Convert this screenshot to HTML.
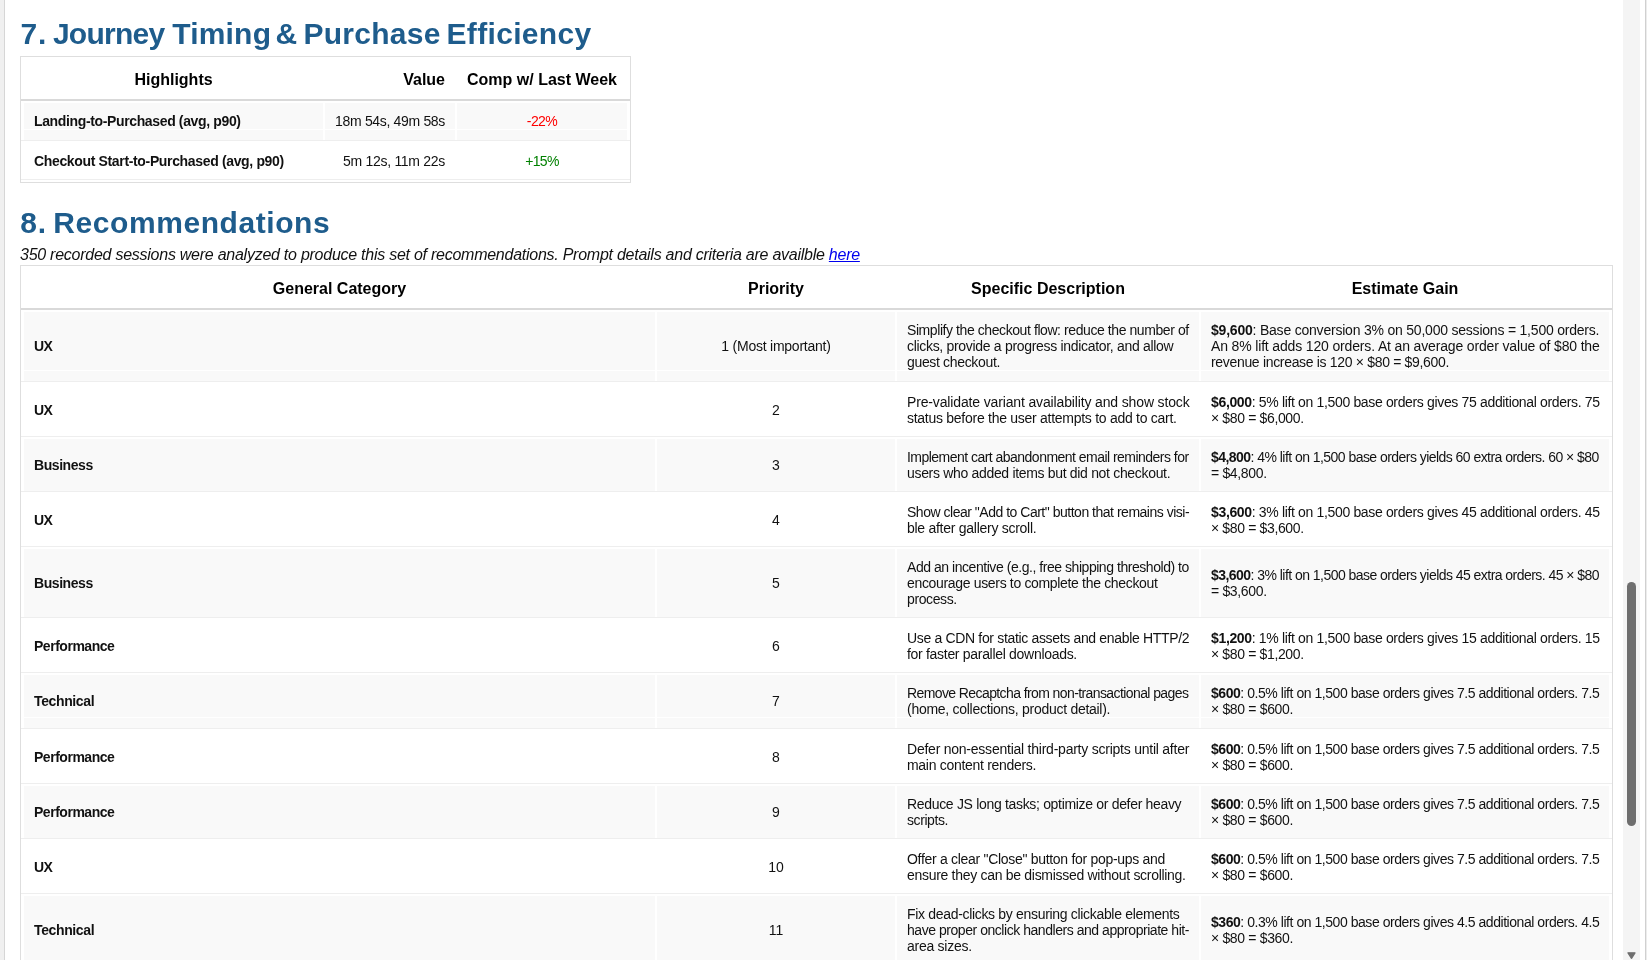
<!DOCTYPE html>
<html><head><meta charset="utf-8"><style>
html,body{margin:0;padding:0;background:#fff;overflow:hidden}
body{width:1647px;height:960px;position:relative;font-family:"Liberation Sans",sans-serif;color:#111}
.a{position:absolute}
.h{position:absolute;color:#1e5c8c;font-weight:bold;font-size:30px;line-height:32px;white-space:nowrap}
.ln{position:absolute;background:#eeeeee;height:1px}
.sl{position:absolute;background:#fff;height:1px}
.bg{position:absolute;background:#f9f9f9}
.th{position:absolute;font-weight:bold;font-size:16px;line-height:18px;white-space:nowrap;color:#000}
.tx{position:absolute;font-size:14px;line-height:16px;white-space:nowrap;color:#111}
.b{font-weight:bold}
.bs{font-weight:bold;font-family:"Liberation Serif",serif;font-size:15px;letter-spacing:0}
</style></head><body>
<div style="position:absolute;left:0;top:0;width:1647px;height:960px;will-change:transform">
<div class="a" style="left:0;top:0;width:4px;height:960px;background:#f0f0f0"></div>
<div class="a" style="left:4px;top:0;width:1px;height:960px;background:#d6d6d6"></div>

<div class="h" id="h7w0" style="left:20.60px;top:18px;letter-spacing:0.800px;">7.</div>
<div class="h" id="h7w1" style="left:52.90px;top:18px;letter-spacing:-0.733px;">Journey</div>
<div class="h" id="h7w2" style="left:172.20px;top:18px;letter-spacing:0.200px;">Timing</div>
<div class="h" id="h7w3" style="left:275.60px;top:18px;letter-spacing:-6.800px;">&amp;</div>
<div class="h" id="h7w4" style="left:303.50px;top:18px;letter-spacing:0.257px;">Purchase</div>
<div class="h" id="h7w5" style="left:446.50px;top:18px;letter-spacing:0.333px;">Efficiency</div>
<div class="a" style="left:20px;top:56px;width:609px;height:125px;border:1px solid #dedede"></div>
<div class="a" style="left:21px;top:99px;width:609px;height:2px;background:#d9d9d9"></div>
<div class="bg" style="left:24px;top:103px;width:299px;height:37px"></div>
<div class="bg" style="left:325px;top:103px;width:130px;height:37px"></div>
<div class="bg" style="left:457px;top:103px;width:170px;height:37px"></div>
<div class="sl" style="left:24px;top:129px;width:603px"></div>
<div class="ln" style="left:21px;top:140px;width:609px"></div>
<div class="ln" style="left:21px;top:179px;width:609px"></div>
<div class="th" style="left:24px;width:299px;top:71px;text-align:center">Highlights</div>
<div class="th" style="left:325px;width:120px;top:71px;text-align:right">Value</div>
<div class="th" style="left:457px;width:170px;top:71px;text-align:center">Comp w/ Last Week</div>
<div class="tx b" id="t1a" style="left:34px;top:113px;letter-spacing:-0.361px;">Landing-to-Purchased (avg, p90)</div>
<div class="tx" id="t1b" style="right:1202px;top:113px;letter-spacing:-0.330px;">18m 54s, 49m 58s</div>
<div class="tx" style="left:457px;width:170px;top:113px;text-align:center;color:#ff0000"><span id="t1c" style="letter-spacing:-0.600px;">-22%</span></div>
<div class="tx b" id="t1d" style="left:34px;top:153px;letter-spacing:-0.346px;">Checkout Start-to-Purchased (avg, p90)</div>
<div class="tx" id="t1e" style="right:1202px;top:153px;letter-spacing:-0.293px;">5m 12s, 11m 22s</div>
<div class="tx" style="left:457px;width:170px;top:153px;text-align:center;color:#008000"><span id="t1f" style="letter-spacing:-0.667px;">+15%</span></div>
<div class="h" id="h8w0" style="left:20.30px;top:207px;letter-spacing:0.800px;">8.</div>
<div class="h" id="h8w1" style="left:53.30px;top:207px;letter-spacing:0.572px;">Recommendations</div>
<div class="a" id="it" style="left:20px;top:246px;font-style:italic;font-size:16px;line-height:18px;white-space:nowrap;color:#111;letter-spacing:-0.255px;">350 recorded sessions were analyzed to produce this set of recommendations. Prompt details and criteria are availble <span style="color:#0000ee;text-decoration:underline">here</span></div>
<div class="a" style="left:20px;top:265px;width:1591px;height:900px;border:1px solid #dedede"></div>
<div class="a" style="left:21px;top:308px;width:1591px;height:2px;background:#d9d9d9"></div>
<div class="th" style="left:24px;width:631px;top:280px;text-align:center">General Category</div>
<div class="th" style="left:657px;width:238px;top:280px;text-align:center">Priority</div>
<div class="th" style="left:897px;width:302px;top:280px;text-align:center">Specific Description</div>
<div class="th" style="left:1201px;width:408px;top:280px;text-align:center">Estimate Gain</div>
<div class="bg" style="left:24px;top:312px;width:631px;height:69px"></div>
<div class="bg" style="left:657px;top:312px;width:238px;height:69px"></div>
<div class="bg" style="left:897px;top:312px;width:302px;height:69px"></div>
<div class="bg" style="left:1201px;top:312px;width:408px;height:69px"></div>
<div class="ln" style="left:21px;top:381px;width:1591px"></div>
<div class="sl" style="left:24px;top:370px;width:1585px"></div>
<div class="tx b" id="c0" style="left:34px;top:338px;letter-spacing:-0.700px;">UX</div>
<div class="tx" style="left:657px;width:238px;top:338px;text-align:center"><span id="p0" style="letter-spacing:-0.236px;">1 (Most important)</span></div>
<div class="tx" id="d0_0" style="left:907px;top:322px;letter-spacing:-0.421px;">Simplify the checkout flow: reduce the number of</div>
<div class="tx" id="d0_1" style="left:907px;top:338px;letter-spacing:-0.309px;">clicks, provide a progress indicator, and allow</div>
<div class="tx" id="d0_2" style="left:907px;top:354px;letter-spacing:-0.339px;">guest checkout.</div>
<div class="tx" id="g0_0" style="left:1211px;top:322px;letter-spacing:-0.212px;"><span class="b">$9,600</span>: Base conversion 3% on 50,000 sessions = 1,500 orders.</div>
<div class="tx" id="g0_1" style="left:1211px;top:338px;letter-spacing:-0.154px;">An 8% lift adds 120 orders. At an average order value of $80 the</div>
<div class="tx" id="g0_2" style="left:1211px;top:354px;letter-spacing:-0.323px;">revenue increase is 120 × $80 = $9,600.</div>
<div class="ln" style="left:21px;top:436px;width:1591px"></div>
<div class="tx b" id="c1" style="left:34px;top:402px;letter-spacing:-0.700px;">UX</div>
<div class="tx" style="left:657px;width:238px;top:402px;text-align:center"><span id="p1" style="">2</span></div>
<div class="tx" id="d1_0" style="left:907px;top:394px;letter-spacing:-0.144px;">Pre-validate variant availability and show stock</div>
<div class="tx" id="d1_1" style="left:907px;top:410px;letter-spacing:-0.272px;">status before the user attempts to add to cart.</div>
<div class="tx" id="g1_0" style="left:1211px;top:394px;letter-spacing:-0.345px;"><span class="b">$6,000</span>: 5% lift on 1,500 base orders gives 75 additional orders. 75</div>
<div class="tx" id="g1_1" style="left:1211px;top:410px;letter-spacing:-0.357px;">× $80 = $6,000.</div>
<div class="bg" style="left:24px;top:439px;width:631px;height:52px"></div>
<div class="bg" style="left:657px;top:439px;width:238px;height:52px"></div>
<div class="bg" style="left:897px;top:439px;width:302px;height:52px"></div>
<div class="bg" style="left:1201px;top:439px;width:408px;height:52px"></div>
<div class="ln" style="left:21px;top:491px;width:1591px"></div>
<div class="tx b" id="c2" style="left:34px;top:457px;letter-spacing:-0.429px;">Business</div>
<div class="tx" style="left:657px;width:238px;top:457px;text-align:center"><span id="p2" style="">3</span></div>
<div class="tx" id="d2_0" style="left:907px;top:449px;letter-spacing:-0.527px;">Implement cart abandonment email reminders for</div>
<div class="tx" id="d2_1" style="left:907px;top:465px;letter-spacing:-0.321px;">users who added items but did not checkout.</div>
<div class="tx" id="g2_0" style="left:1211px;top:449px;letter-spacing:-0.544px;"><span class="b">$4,800</span>: 4% lift on 1,500 base orders yields 60 extra orders. 60 × $80</div>
<div class="tx" id="g2_1" style="left:1211px;top:465px;letter-spacing:-0.344px;">= $4,800.</div>
<div class="ln" style="left:21px;top:546px;width:1591px"></div>
<div class="tx b" id="c3" style="left:34px;top:512px;letter-spacing:-0.700px;">UX</div>
<div class="tx" style="left:657px;width:238px;top:512px;text-align:center"><span id="p3" style="">4</span></div>
<div class="tx" id="d3_0" style="left:907px;top:504px;letter-spacing:-0.485px;">Show clear "Add to Cart" button that remains visi-</div>
<div class="tx" id="d3_1" style="left:907px;top:520px;letter-spacing:-0.271px;">ble after gallery scroll.</div>
<div class="tx" id="g3_0" style="left:1211px;top:504px;letter-spacing:-0.345px;"><span class="b">$3,600</span>: 3% lift on 1,500 base orders gives 45 additional orders. 45</div>
<div class="tx" id="g3_1" style="left:1211px;top:520px;letter-spacing:-0.357px;">× $80 = $3,600.</div>
<div class="bg" style="left:24px;top:549px;width:631px;height:68px"></div>
<div class="bg" style="left:657px;top:549px;width:238px;height:68px"></div>
<div class="bg" style="left:897px;top:549px;width:302px;height:68px"></div>
<div class="bg" style="left:1201px;top:549px;width:408px;height:68px"></div>
<div class="ln" style="left:21px;top:617px;width:1591px"></div>
<div class="tx b" id="c4" style="left:34px;top:575px;letter-spacing:-0.429px;">Business</div>
<div class="tx" style="left:657px;width:238px;top:575px;text-align:center"><span id="p4" style="">5</span></div>
<div class="tx" id="d4_0" style="left:907px;top:559px;letter-spacing:-0.455px;">Add an incentive (e.g., free shipping threshold) to</div>
<div class="tx" id="d4_1" style="left:907px;top:575px;letter-spacing:-0.333px;">encourage users to complete the checkout</div>
<div class="tx" id="d4_2" style="left:907px;top:591px;letter-spacing:-0.393px;">process.</div>
<div class="tx" id="g4_0" style="left:1211px;top:567px;letter-spacing:-0.540px;"><span class="b">$3,600</span>: 3% lift on 1,500 base orders yields 45 extra orders. 45 × $80</div>
<div class="tx" id="g4_1" style="left:1211px;top:583px;letter-spacing:-0.344px;">= $3,600.</div>
<div class="ln" style="left:21px;top:672px;width:1591px"></div>
<div class="tx b" id="c5" style="left:34px;top:638px;letter-spacing:-0.475px;">Performance</div>
<div class="tx" style="left:657px;width:238px;top:638px;text-align:center"><span id="p5" style="">6</span></div>
<div class="tx" id="d5_0" style="left:907px;top:630px;letter-spacing:-0.335px;">Use a CDN for static assets and enable HTTP/2</div>
<div class="tx" id="d5_1" style="left:907px;top:646px;letter-spacing:-0.302px;">for faster parallel downloads.</div>
<div class="tx" id="g5_0" style="left:1211px;top:630px;letter-spacing:-0.345px;"><span class="b">$1,200</span>: 1% lift on 1,500 base orders gives 15 additional orders. 15</div>
<div class="tx" id="g5_1" style="left:1211px;top:646px;letter-spacing:-0.357px;">× $80 = $1,200.</div>
<div class="bg" style="left:24px;top:675px;width:631px;height:53px"></div>
<div class="bg" style="left:657px;top:675px;width:238px;height:53px"></div>
<div class="bg" style="left:897px;top:675px;width:302px;height:53px"></div>
<div class="bg" style="left:1201px;top:675px;width:408px;height:53px"></div>
<div class="ln" style="left:21px;top:728px;width:1591px"></div>
<div class="sl" style="left:24px;top:717px;width:1585px"></div>
<div class="tx b" id="c6" style="left:34px;top:693px;letter-spacing:-0.375px;">Technical</div>
<div class="tx" style="left:657px;width:238px;top:693px;text-align:center"><span id="p6" style="">7</span></div>
<div class="tx" id="d6_0" style="left:907px;top:685px;letter-spacing:-0.597px;">Remove Recaptcha from non-transactional pages</div>
<div class="tx" id="d6_1" style="left:907px;top:701px;letter-spacing:-0.279px;">(home, collections, product detail).</div>
<div class="tx" id="g6_0" style="left:1211px;top:685px;letter-spacing:-0.452px;"><span class="b">$600</span>: 0.5% lift on 1,500 base orders gives 7.5 additional orders. 7.5</div>
<div class="tx" id="g6_1" style="left:1211px;top:701px;letter-spacing:-0.333px;">× $80 = $600.</div>
<div class="ln" style="left:21px;top:783px;width:1591px"></div>
<div class="tx b" id="c7" style="left:34px;top:749px;letter-spacing:-0.475px;">Performance</div>
<div class="tx" style="left:657px;width:238px;top:749px;text-align:center"><span id="p7" style="">8</span></div>
<div class="tx" id="d7_0" style="left:907px;top:741px;letter-spacing:-0.235px;">Defer non-essential third-party scripts until after</div>
<div class="tx" id="d7_1" style="left:907px;top:757px;letter-spacing:-0.300px;">main content renders.</div>
<div class="tx" id="g7_0" style="left:1211px;top:741px;letter-spacing:-0.452px;"><span class="b">$600</span>: 0.5% lift on 1,500 base orders gives 7.5 additional orders. 7.5</div>
<div class="tx" id="g7_1" style="left:1211px;top:757px;letter-spacing:-0.333px;">× $80 = $600.</div>
<div class="bg" style="left:24px;top:786px;width:631px;height:52px"></div>
<div class="bg" style="left:657px;top:786px;width:238px;height:52px"></div>
<div class="bg" style="left:897px;top:786px;width:302px;height:52px"></div>
<div class="bg" style="left:1201px;top:786px;width:408px;height:52px"></div>
<div class="ln" style="left:21px;top:838px;width:1591px"></div>
<div class="tx b" id="c8" style="left:34px;top:804px;letter-spacing:-0.475px;">Performance</div>
<div class="tx" style="left:657px;width:238px;top:804px;text-align:center"><span id="p8" style="">9</span></div>
<div class="tx" id="d8_0" style="left:907px;top:796px;letter-spacing:-0.320px;">Reduce JS long tasks; optimize or defer heavy</div>
<div class="tx" id="d8_1" style="left:907px;top:812px;letter-spacing:-0.415px;">scripts.</div>
<div class="tx" id="g8_0" style="left:1211px;top:796px;letter-spacing:-0.452px;"><span class="b">$600</span>: 0.5% lift on 1,500 base orders gives 7.5 additional orders. 7.5</div>
<div class="tx" id="g8_1" style="left:1211px;top:812px;letter-spacing:-0.333px;">× $80 = $600.</div>
<div class="ln" style="left:21px;top:893px;width:1591px"></div>
<div class="tx b" id="c9" style="left:34px;top:859px;letter-spacing:-0.700px;">UX</div>
<div class="tx" style="left:657px;width:238px;top:859px;text-align:center"><span id="p9" style="">10</span></div>
<div class="tx" id="d9_0" style="left:907px;top:851px;letter-spacing:-0.299px;">Offer a clear "Close" button for pop-ups and</div>
<div class="tx" id="d9_1" style="left:907px;top:867px;letter-spacing:-0.296px;">ensure they can be dismissed without scrolling.</div>
<div class="tx" id="g9_0" style="left:1211px;top:851px;letter-spacing:-0.452px;"><span class="b">$600</span>: 0.5% lift on 1,500 base orders gives 7.5 additional orders. 7.5</div>
<div class="tx" id="g9_1" style="left:1211px;top:867px;letter-spacing:-0.333px;">× $80 = $600.</div>
<div class="bg" style="left:24px;top:896px;width:631px;height:69px"></div>
<div class="bg" style="left:657px;top:896px;width:238px;height:69px"></div>
<div class="bg" style="left:897px;top:896px;width:302px;height:69px"></div>
<div class="bg" style="left:1201px;top:896px;width:408px;height:69px"></div>
<div class="tx b" id="c10" style="left:34px;top:922px;letter-spacing:-0.375px;">Technical</div>
<div class="tx" style="left:657px;width:238px;top:922px;text-align:center"><span id="p10" style="">11</span></div>
<div class="tx" id="d10_0" style="left:907px;top:906px;letter-spacing:-0.319px;">Fix dead-clicks by ensuring clickable elements</div>
<div class="tx" id="d10_1" style="left:907px;top:922px;letter-spacing:-0.455px;">have proper onclick handlers and appropriate hit-</div>
<div class="tx" id="d10_2" style="left:907px;top:938px;letter-spacing:-0.260px;">area sizes.</div>
<div class="tx" id="g10_0" style="left:1211px;top:914px;letter-spacing:-0.452px;"><span class="b">$360</span>: 0.3% lift on 1,500 base orders gives 4.5 additional orders. 4.5</div>
<div class="tx" id="g10_1" style="left:1211px;top:930px;letter-spacing:-0.333px;">× $80 = $360.</div>
<div class="a" style="left:1623px;top:0;width:17px;height:960px;background:#f4f4f4"></div>
<div class="a" style="left:1627px;top:582px;width:9px;height:244px;background:#6e6e6e;border-radius:4.5px"></div>
<div class="a" style="left:1645px;top:0;width:1px;height:960px;background:#d0d0d0"></div>
<div class="a" style="left:1646px;top:0;width:1px;height:960px;background:#ececec"></div>
<svg class="a" style="left:1626px;top:951px" width="11" height="9"><path d="M2 1.8 L9 1.8 L5.5 7.3 Z" fill="#6e6e6e" stroke="#6e6e6e" stroke-width="1.3" stroke-linejoin="round"/></svg>
</div></body></html>
